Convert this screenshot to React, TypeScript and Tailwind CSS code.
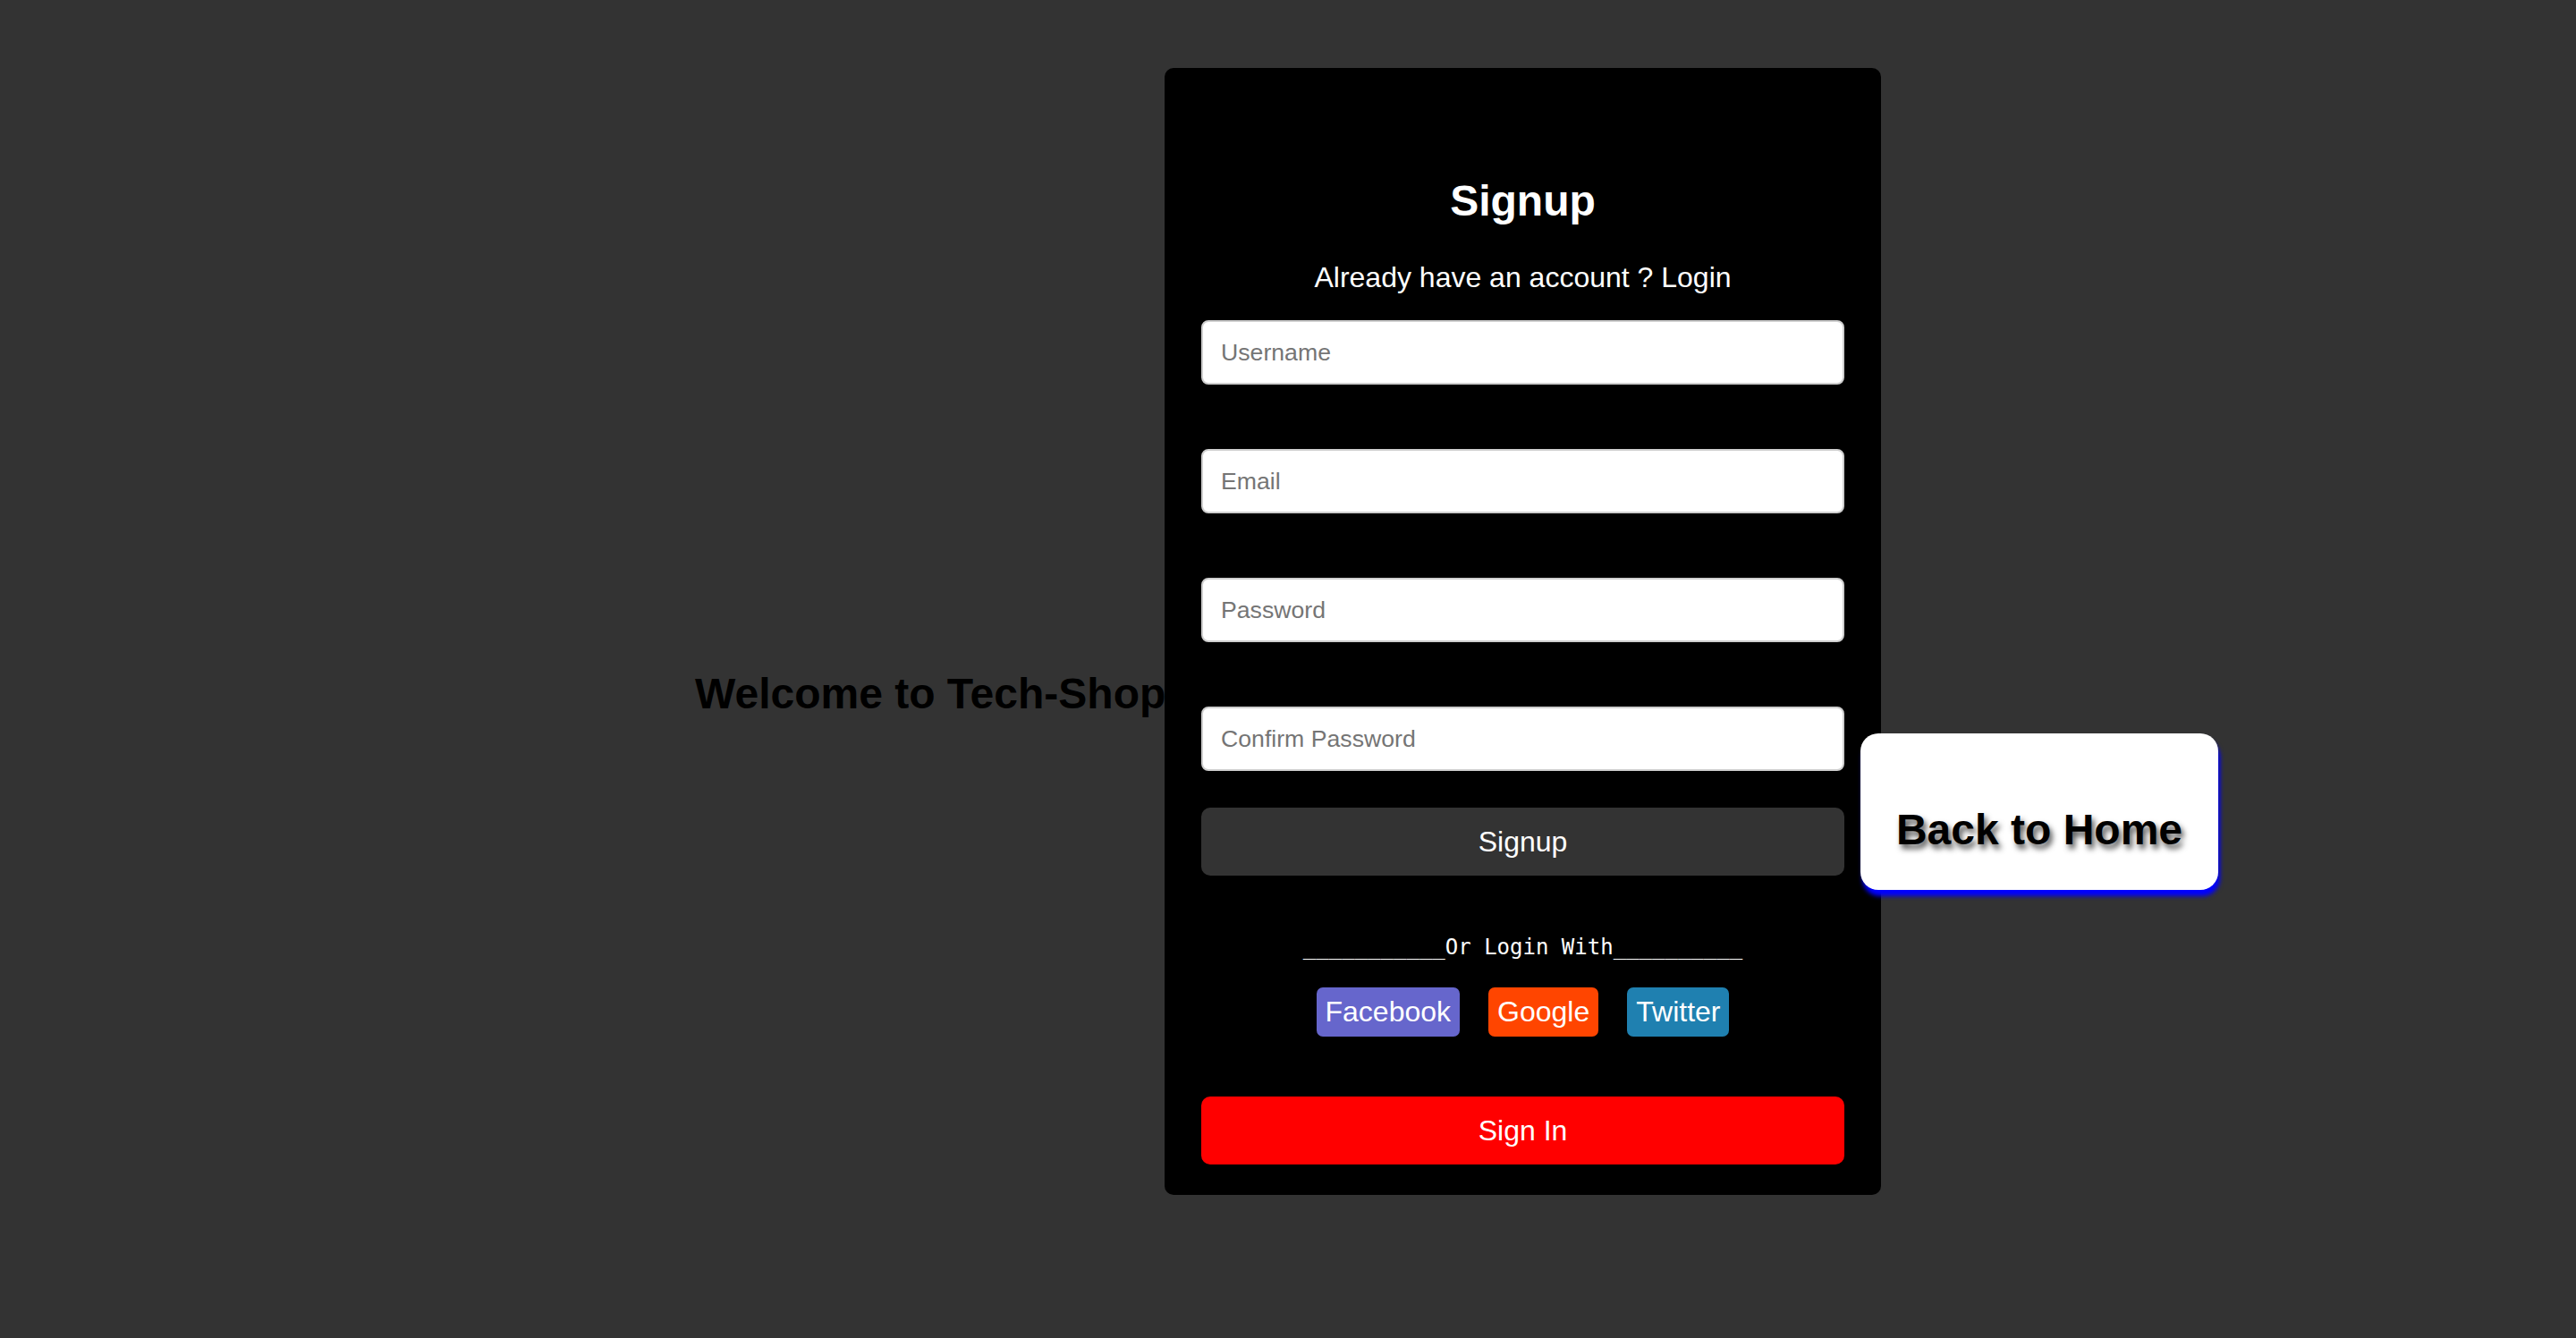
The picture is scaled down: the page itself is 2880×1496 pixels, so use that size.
import React from "react";

const fields = [
  { id: "username", type: "text", placeholder: "Username" },
  { id: "email", type: "email", placeholder: "Email" },
  { id: "password", type: "password", placeholder: "Password" },
  { id: "confirm", type: "password", placeholder: "Confirm Password" },
];

const socials = [
  { label: "Facebook", color: "bg-[#6666cc]" },
  { label: "Google", color: "bg-[#ff4500]" },
  { label: "Twitter", color: "bg-[#1f80b0]" },
];

export default function App() {
  return (
    <div className="min-h-screen w-full bg-[#333333] flex items-start pl-[777px] font-['Liberation_Sans',Arial,sans-serif]">
      {/* Left welcome */}
      <h1 className="mt-[748px] w-[525px] shrink-0 text-right whitespace-nowrap text-[48px] leading-[55px] font-bold text-black">
        Welcome to Tech-Shop
      </h1>

      {/* Signup card */}
      <div className="mt-[76px] w-[801px] shrink-0 bg-black rounded-[10px] px-[41px] pt-[121px] pb-[34px] flex flex-col">
        <h2 className="text-center text-white font-bold text-[48px] leading-[55px]">
          Signup
        </h2>
        <p className="mt-[40px] text-center text-white text-[32px] leading-[37px]">
          Already have an account ? Login
        </p>

        <form className="mt-[29px] flex flex-col gap-[72px]" onSubmit={(e) => e.preventDefault()}>
          {fields.map((f) => (
            <input
              key={f.id}
              type={f.type}
              placeholder={f.placeholder}
              className="h-[72px] w-full rounded-[8px] bg-white border-2 border-[#cfcfcf] px-[20px] text-[26.67px] text-black placeholder:text-[#757575] outline-none"
            />
          ))}
        </form>

        <button className="mt-[41px] h-[76px] w-full rounded-[10px] bg-[#333333] text-white text-[32px] leading-[37px]">
          Signup
        </button>

        <p className="mt-[66px] text-center text-white text-[24px] leading-[28px] font-['DejaVu_Sans_Mono',monospace] whitespace-pre">
          ___________Or Login With__________
        </p>

        <div className="mt-[31px] flex justify-center gap-[32px]">
          {socials.map((s) => (
            <button
              key={s.label}
              className={`${s.color} h-[55px] rounded-[7px] px-[10px] pt-[0px] text-white text-[32px] leading-[37px]`}
            >
              {s.label}
            </button>
          ))}
        </div>

        <button className="mt-[67px] h-[76px] w-full rounded-[10px] bg-[#ff0000] text-white text-[32px] leading-[37px]">
          Sign In
        </button>
      </div>

      {/* Back to home */}
      <button className="relative -ml-[23px] mt-[820px] w-[400px] shrink-0 bg-white rounded-[20px] pt-[80px] pb-[40px] shadow-[2px_7px_5px_#0000ff] text-black font-bold text-[48px] leading-[55px] [text-shadow:3px_5px_6px_#555555]">
        Back to Home
      </button>
    </div>
  );
}
